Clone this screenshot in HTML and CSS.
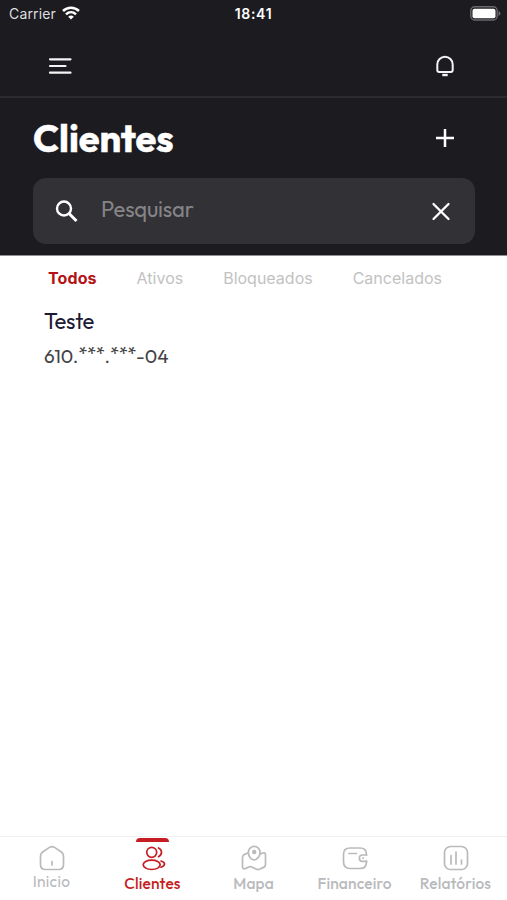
FILE: index.html
```html
<!DOCTYPE html>
<html lang="pt-BR">
<head>
<meta charset="utf-8">
<meta name="viewport" content="width=device-width, initial-scale=1">
<title>Clientes</title>
<link rel="stylesheet" href="styles.css">
</head>
<body>
<div class="app">
  <header class="header">
    <div class="status">
      <div class="carrier"><span>Carrier</span>
        <svg width="18" height="14" viewBox="0 0 18 14" fill="none" stroke="#fff" stroke-width="2.500"><path d="M1 5C5.500.6 12.500.6 17 5"/><path d="M4 8.300C7 5.500 11 5.500 14 8.300"/><path d="M9 13.600 6.200 10.700Q9 8.500 11.800 10.700Z" fill="#fff" stroke="none"/></svg>
      </div>
      <span class="clock">18:41</span>
      <svg class="battery" width="31" height="15" viewBox="0 0 31 15"><rect x=".8" y=".8" width="26.400" height="13.200" rx="4" fill="#1c1b20" stroke="#69696c" stroke-width="1.400"/><rect x="2.500" y="2.700" width="23" height="9.500" rx="2" fill="#fff"/><path d="M28.500 5v5q2-.8 2-2.500t-2-2.500" fill="#69696c"/></svg>
    </div>
    <div class="topbar">
      <svg width="24" height="18" viewBox="0 0 24 18" stroke="#f4f4f4" stroke-width="2.200" stroke-linecap="round"><path d="M2 2.300h20.500M2 9h15.500M2 15.700h20.500"/></svg>
      <svg width="20" height="22" viewBox="0 0 20 22" fill="none" stroke="#f4f4f4" stroke-width="2"><path d="M2.300 15V9.500a7.700 7.700 0 0 1 15.400 0V15a2 2 0 0 1-2 2H4.300a2 2 0 0 1-2-2Z"/><path d="M7.300 20h5.400" stroke-width="2.400"/></svg>
    </div>
    <div class="heading">
      <h1>Clientes</h1>
      <svg width="20" height="20" viewBox="0 0 20 20" stroke="#fff" stroke-width="2.500"><path d="M10 1v18M1 10h18"/></svg>
    </div>
    <div class="search">
      <svg width="24" height="24" viewBox="0 0 24 24" fill="none" stroke="#fff" stroke-width="2.400"><circle cx="9" cy="8.500" r="7"/><path d="m14 13.500 7.500 7.500" stroke-width="3"/></svg>
      <span class="placeholder">Pesquisar</span>
      <svg width="20" height="20" viewBox="0 0 20 20" stroke="#fff" stroke-width="2.300" stroke-linecap="round"><path d="m2.500 2 15 15m0-15-15 15"/></svg>
    </div>
  </header>
  <nav class="tabs">
    <span class="tab selected">Todos</span><span class="tab">Ativos</span><span class="tab">Bloqueados</span><span class="tab">Cancelados</span>
  </nav>
  <main class="list">
    <article>
      <h2>Teste</h2>
      <p>610.<span class="mask">***</span>.<span class="mask">***</span>-04</p>
    </article>
  </main>
  <footer class="bottom">
    <div class="item inicio">
      <svg width="26" height="26" viewBox="0 0 26 26"><path d="M10.500 2.400 3.600 7Q1.500 8.500 1.500 11v8.500q0 5 5 5h13q5 0 5-5V11q0-2.500-2.100-4l-6.900-4.600q-2.500-1.600-5 0Z"/><path d="M13 16.500v3.500"/></svg>
      <span>Inicio</span>
    </div>
    <div class="item active">
      <svg width="26" height="26" viewBox="0 0 26 26"><circle cx="11.700" cy="7.300" r="5"/><ellipse cx="11.700" cy="19.800" rx="8.500" ry="4.700"/><path d="M18.500 3q3 1.300 3 4.300t-3 4.400M21 16q3.500 1 3.500 3t-3.500 3.200"/></svg>
      <span>Clientes</span>
    </div>
    <div class="item">
      <svg width="26" height="26" viewBox="0 0 26 26"><path d="M7 8 3.500 9.400Q1.500 10.200 1.500 12.500v9q0 3.200 3 2l3.200-1.600q1.500-.7 3 0l4.800 2.300q1.500.7 3 0l4-1.800q2-.9 2-3V10q0-3-2.800-2l-2.400.9"/><path d="M7.400 7.200a5.800 5.800 0 0 1 11.600 0c0 3.200-2 6.100-4.200 7.300q-1.600.8-3.200 0c-2.300-1.200-4.200-4.100-4.200-7.300Z"/><circle cx="13.200" cy="7" r="1.400" fill="currentColor"/></svg>
      <span>Mapa</span>
    </div>
    <div class="item">
      <svg width="26" height="26" viewBox="0 0 26 26"><path d="M24.500 10V9.500q0-6.500-6.500-6.500H8Q1.500 3 1.500 9.500v7Q1.500 23.500 8 23.500h10q6.500 0 6.500-6.500v-1"/><path d="M24.500 10h-4a3 3 0 0 0 0 6.300h4M7 8.500h7.500"/><path d="M20.800 13.100h.4"/></svg>
      <span>Financeiro</span>
    </div>
    <div class="item">
      <svg width="26" height="26" viewBox="0 0 26 26"><rect x="1.500" y="1.500" width="23" height="23" rx="6"/><path d="M8 10.500v8.500M13 7v12M18.500 15v4"/></svg>
      <span>Relatórios</span>
    </div>
  </footer>
</div>
</body>
</html>
```
FILE: styles.css
```css
* { box-sizing: border-box; }
body, h1, h2, p { margin: 0; }
body { background: #fff; font-family: Outfit, Lato, sans-serif; }
svg { display: block; flex: none; }
.app { height: 900px; display: flex; flex-direction: column; overflow: hidden; }
.header { height: 256px; background: #1c1b20; color: #fff; border-bottom: 1px solid #908f92; }
.status { height: 28px; padding: 0 6px 1px 9px; display: grid; grid-template-columns: 1fr auto 1fr; align-items: center; font: 14px/20px Inter, sans-serif; }
.carrier { display: flex; align-items: center; gap: 6px; color: #dededf; letter-spacing: .15px; }
.carrier svg { margin-top: -1px; }
.clock { font-weight: 600; letter-spacing: .7px; margin-right: 3px; }
.battery { justify-self: end; margin-top: -1px; }
.topbar { height: 70px; padding: 8px 52px 0 48px; display: flex; align-items: center; justify-content: space-between; border-bottom: 2px solid #2b2a2f; }
.heading { height: 80px; padding: 0 52px 0 33px; display: flex; align-items: center; justify-content: space-between; }
h1 { font-size: 38px; line-height: 46px; font-weight: 700; letter-spacing: -.1px; -webkit-text-stroke: .4px #fff; }
.search { height: 66px; margin: 0 32px 0 33px; padding: 1px 24px 0 22px; background: #323135; border-radius: 13px; display: flex; align-items: center; }
.placeholder { flex: 1; margin: -6px 0 0 22px; color: #858487; font-size: 22px; line-height: 28px; letter-spacing: -.2px; }
.tabs { height: 45px; padding: 0 0 1px 48px; display: flex; align-items: center; gap: 40px; font: 16px/20px Inter, sans-serif; color: #c2c2c2; }
.selected { color: #b31217; font-weight: 700; letter-spacing: .1px; }
.list { flex: 1; padding: 5px 44px; }
h2 { color: #1c1a35; font-size: 22px; line-height: 30px; font-weight: 400; letter-spacing: -.3px; }
p { margin-top: 5px; color: #434345; font-size: 19px; line-height: 30px; }
.mask { display: inline-block; line-height: 20px; transform: translateY(-3px); letter-spacing: -.6px; }
.bottom { height: 64px; border-top: 1px solid #f0f0f0; display: grid; grid-template-columns: repeat(5, 101px); padding-left: 1px; }
.item { display: flex; flex-direction: column; align-items: center; padding-top: 8px; color: #b9babc; font-size: 15.5px; line-height: 20px; font-weight: 500; letter-spacing: .15px; position: relative; }
.item svg { fill: none; stroke: currentColor; stroke-width: 1.7; stroke-linecap: round; stroke-linejoin: round; }
.item span { margin-top: 2px; white-space: nowrap; }
.item.inicio span { margin-top: 0; font-weight: 400; letter-spacing: .3px; }
.item.active { color: #c51d23; }
.active::before { content: ""; position: absolute; top: 1px; width: 33px; height: 4px; border-radius: 4px 4px 0 0; background: currentColor; }
```
